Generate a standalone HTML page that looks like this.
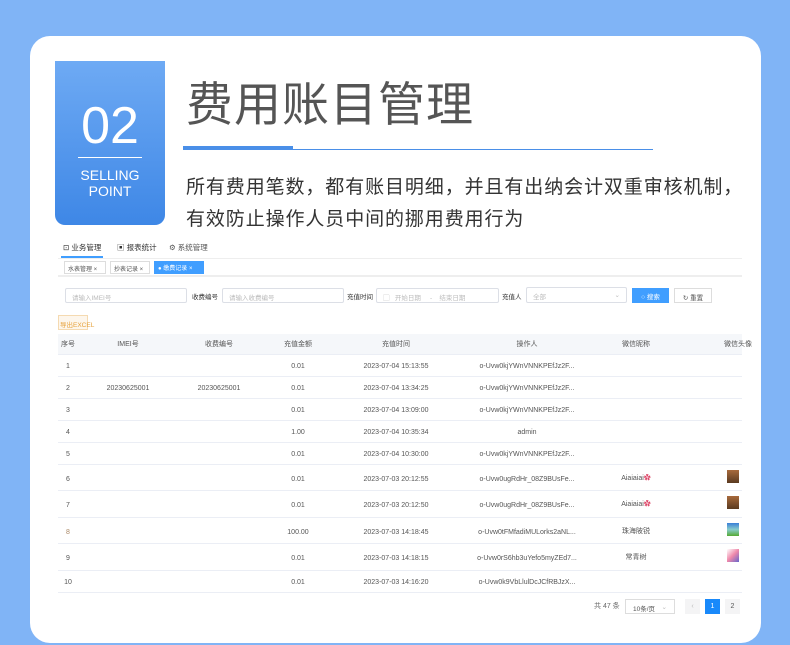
<!DOCTYPE html>
<html><head><meta charset="utf-8"><style>
*{margin:0;padding:0;box-sizing:border-box}
body{width:790px;height:645px;background:#80b4f6;position:relative;overflow:hidden;font-family:"Liberation Sans","Noto Sans CJK SC",sans-serif}
.card{position:absolute;left:30px;top:36px;width:731px;height:607px;background:#fff;border-radius:20px}
.a{position:absolute;white-space:nowrap}
.badge{position:absolute;left:55px;top:61px;width:110px;height:164px;background:linear-gradient(#6eaaf4,#3e87e6);border-radius:0 0 10px 10px;color:#fff;text-align:center}
.s{font-size:7px;color:#333}
.in{position:absolute;height:15px;border:1px solid #dcdfe6;border-radius:2px;font-size:6.5px;color:#bbb;padding:3px 6px;white-space:nowrap}
.row{position:absolute;left:58px;width:684px;border-bottom:1px solid #ebeef5}
.c{position:absolute;font-size:7px;line-height:9px;color:#555;transform:translateX(-50%);white-space:nowrap}
</style></head><body>
<div class="card"></div>
<div class="badge">
<div class="a" style="left:0;width:110px;top:36px;font-size:52px;line-height:58px">02</div>
<div class="a" style="left:23px;top:96px;width:64px;height:1px;background:#fff"></div>
<div class="a" style="left:0;width:110px;top:106px;font-size:14px;line-height:16px">SELLING<br>POINT</div>
</div>
<div class="a" style="left:186px;top:75px;font-size:47px;color:#555;letter-spacing:1px;line-height:60px">费用账目管理</div>
<div class="a" style="left:183px;top:146px;width:110px;height:4px;background:#4a8fe8"></div>
<div class="a" style="left:183px;top:149px;width:470px;height:1px;background:#4a8fe8"></div>
<div class="a" style="left:186px;top:172px;font-size:19px;letter-spacing:0.9px;color:#333;line-height:32px">所有费用笔数，都有账目明细，并且有出纳会计双重审核机制，<br>有效防止操作人员中间的挪用费用行为</div>

<div class="a s" style="left:63px;top:242px;font-size:7.5px">⊡ 业务管理</div>
<div class="a" style="left:61px;top:256px;width:42px;height:2px;background:#409eff"></div>
<div class="a s" style="left:117px;top:242px;font-size:7.5px">▣ 报表统计</div>
<div class="a s" style="left:169px;top:242px;font-size:7.5px;color:#555">⚙ 系统管理</div>
<div class="a" style="left:58px;top:258px;width:684px;height:1px;background:#eee"></div>
<div class="a" style="left:64px;top:261px;width:42px;height:13px;border:1px solid #ddd;font-size:6px;color:#555;padding:2px 3px">水表管理 ×</div>
<div class="a" style="left:110px;top:261px;width:40px;height:13px;border:1px solid #ddd;font-size:6px;color:#555;padding:2px 3px">抄表记录 ×</div>
<div class="a" style="left:154px;top:261px;width:50px;height:13px;background:#409eff;font-size:6px;color:#fff;padding:2px 4px">● 缴费记录 ×</div>
<div class="a" style="left:58px;top:275px;width:684px;height:2px;background:#eee"></div>

<div class="in" style="left:65px;top:288px;width:122px">请输入IMEI号</div>
<div class="a s" style="left:192px;top:291px;font-size:6.5px">收费编号</div>
<div class="in" style="left:222px;top:288px;width:122px">请输入收费编号</div>
<div class="a s" style="left:347px;top:291px;font-size:6.5px">充值时间</div>
<div class="in" style="left:376px;top:288px;width:123px">▢&nbsp;&nbsp;&nbsp;开始日期&nbsp;&nbsp;&nbsp;&nbsp;&nbsp;-&nbsp;&nbsp;&nbsp;&nbsp;结束日期</div>
<div class="a s" style="left:502px;top:291px;font-size:6.5px">充值人</div>
<div class="in" style="left:526px;top:287px;width:101px;height:16px">全部<span style="float:right">⌄</span></div>
<div class="a" style="left:632px;top:288px;width:37px;height:15px;background:#409eff;color:#fff;font-size:6.5px;padding:3px 0;text-align:center">○ 搜索</div>
<div class="a" style="left:674px;top:288px;width:38px;height:15px;border:1px solid #ddd;color:#555;font-size:6.5px;padding:3px 0;text-align:center">↻ 重置</div>
<div class="a" style="left:58px;top:315px;width:30px;height:15px;background:#fdf6ec;border:1px solid #f5dab1;color:#e6a23c;font-size:6.5px;padding:3px 1px">导出EXCEL</div>

<div class="a" style="left:58px;top:334px;width:684px;height:21px;background:#f5f7fa;border-bottom:1px solid #ebeef5"></div>
<div class="c" style="left:68px;top:340px">序号</div>
<div class="c" style="left:128px;top:340px">IMEI号</div>
<div class="c" style="left:219px;top:340px">收费编号</div>
<div class="c" style="left:298px;top:340px">充值金额</div>
<div class="c" style="left:396px;top:340px">充值时间</div>
<div class="c" style="left:527px;top:340px">操作人</div>
<div class="c" style="left:636px;top:340px">微信昵称</div>
<div class="c" style="left:738px;top:340px">微信头像</div>

<div class="row" style="top:355px;height:22px"></div>
<div class="row" style="top:377px;height:22px"></div>
<div class="row" style="top:399px;height:22px"></div>
<div class="row" style="top:421px;height:22px"></div>
<div class="row" style="top:443px;height:22px"></div>
<div class="row" style="top:465px;height:26px"></div>
<div class="row" style="top:491px;height:27px"></div>
<div class="row" style="top:518px;height:26px"></div>
<div class="row" style="top:544px;height:27px"></div>
<div class="row" style="top:571px;height:22px"></div>

<div class="c" style="left:68px;top:362px">1</div><div class="c" style="left:298px;top:362px">0.01</div><div class="c" style="left:396px;top:362px">2023-07-04 15:13:55</div><div class="c" style="left:527px;top:362px">o-Uvw0kjYWnVNNKPEfJz2F...</div>
<div class="c" style="left:68px;top:384px">2</div><div class="c" style="left:128px;top:384px">20230625001</div><div class="c" style="left:219px;top:384px">20230625001</div><div class="c" style="left:298px;top:384px">0.01</div><div class="c" style="left:396px;top:384px">2023-07-04 13:34:25</div><div class="c" style="left:527px;top:384px">o-Uvw0kjYWnVNNKPEfJz2F...</div>
<div class="c" style="left:68px;top:406px">3</div><div class="c" style="left:298px;top:406px">0.01</div><div class="c" style="left:396px;top:406px">2023-07-04 13:09:00</div><div class="c" style="left:527px;top:406px">o-Uvw0kjYWnVNNKPEfJz2F...</div>
<div class="c" style="left:68px;top:428px">4</div><div class="c" style="left:298px;top:428px">1.00</div><div class="c" style="left:396px;top:428px">2023-07-04 10:35:34</div><div class="c" style="left:527px;top:428px">admin</div>
<div class="c" style="left:68px;top:450px">5</div><div class="c" style="left:298px;top:450px">0.01</div><div class="c" style="left:396px;top:450px">2023-07-04 10:30:00</div><div class="c" style="left:527px;top:450px">o-Uvw0kjYWnVNNKPEfJz2F...</div>
<div class="c" style="left:68px;top:475px">6</div><div class="c" style="left:298px;top:475px">0.01</div><div class="c" style="left:396px;top:475px">2023-07-03 20:12:55</div><div class="c" style="left:527px;top:475px">o-Uvw0ugRdHr_08Z9BUsFe...</div><div class="c" style="left:636px;top:474px">Aiaiaiai<span style="color:#d46">✿</span></div>
<div class="c" style="left:68px;top:501px">7</div><div class="c" style="left:298px;top:501px">0.01</div><div class="c" style="left:396px;top:501px">2023-07-03 20:12:50</div><div class="c" style="left:527px;top:501px">o-Uvw0ugRdHr_08Z9BUsFe...</div><div class="c" style="left:636px;top:500px">Aiaiaiai<span style="color:#d46">✿</span></div>
<div class="c" style="left:68px;top:528px;color:#a86">8</div><div class="c" style="left:298px;top:528px">100.00</div><div class="c" style="left:396px;top:528px">2023-07-03 14:18:45</div><div class="c" style="left:527px;top:528px">o-Uvw0tFMfadiMULorks2aNL...</div><div class="c" style="left:636px;top:527px">珠海陂锐</div>
<div class="c" style="left:68px;top:554px">9</div><div class="c" style="left:298px;top:554px">0.01</div><div class="c" style="left:396px;top:554px">2023-07-03 14:18:15</div><div class="c" style="left:527px;top:554px">o-Uvw0rS6hb3uYefo5myZEd7...</div><div class="c" style="left:636px;top:553px">常青树</div>
<div class="c" style="left:68px;top:578px">10</div><div class="c" style="left:298px;top:578px">0.01</div><div class="c" style="left:396px;top:578px">2023-07-03 14:16:20</div><div class="c" style="left:527px;top:578px">o-Uvw0k9VbLlulDcJCfRBJzX...</div>

<div class="a" style="left:727px;top:470px;width:12px;height:13px;background:linear-gradient(#a86a3c,#5a3a20)"></div>
<div class="a" style="left:727px;top:496px;width:12px;height:13px;background:linear-gradient(#a86a3c,#5a3a20)"></div>
<div class="a" style="left:727px;top:523px;width:12px;height:13px;background:linear-gradient(#3a7fd8,#8cc 50%,#5a3)"></div>
<div class="a" style="left:727px;top:549px;width:12px;height:13px;background:linear-gradient(135deg,#fff,#e8a 50%,#66c)"></div>

<div class="a" style="left:594px;top:601px;font-size:7px;color:#666">共 47 条</div>
<div class="a" style="left:625px;top:599px;width:50px;height:15px;border:1px solid #ddd;font-size:6.5px;color:#555;padding:3px 7px">10条/页 <span style="color:#bbb;float:right">⌄</span></div>
<div class="a" style="left:685px;top:599px;width:15px;height:15px;background:#f4f4f5;color:#bbb;font-size:7px;text-align:center;line-height:15px">‹</div>
<div class="a" style="left:705px;top:599px;width:15px;height:15px;background:#1989fa;color:#fff;font-size:7px;text-align:center;line-height:15px">1</div>
<div class="a" style="left:725px;top:599px;width:15px;height:15px;background:#f4f4f5;color:#555;font-size:7px;text-align:center;line-height:15px">2</div>
</body></html>
